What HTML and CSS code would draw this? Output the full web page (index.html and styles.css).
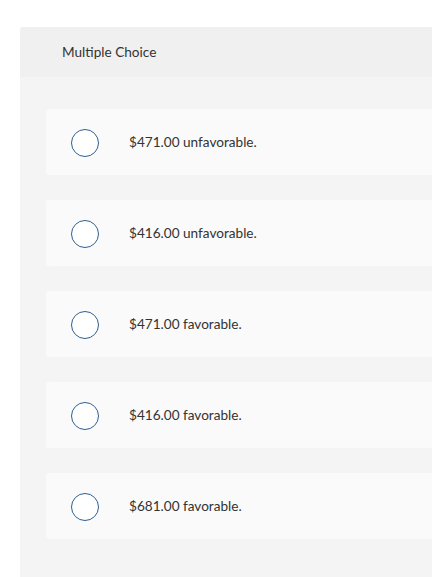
FILE: index.html
```html
<!DOCTYPE html>
<html>
<head>
<meta charset="utf-8">
<link rel="stylesheet" href="styles.css">
</head>
<body>
<div class="question">
  <div class="q-header">Multiple Choice</div>
  <div class="q-body">
    <div class="choice"><span class="radio"></span><span class="label">$471.00 unfavorable.</span></div>
    <div class="choice"><span class="radio"></span><span class="label">$416.00 unfavorable.</span></div>
    <div class="choice"><span class="radio"></span><span class="label">$471.00 favorable.</span></div>
    <div class="choice"><span class="radio"></span><span class="label">$416.00 favorable.</span></div>
    <div class="choice"><span class="radio"></span><span class="label">$681.00 favorable.</span></div>
  </div>
</div>
</body>
</html>
```

FILE: styles.css
```css
html, body {
  margin: 0;
  padding: 0;
  background: #ffffff;
  overflow: hidden;
  height: 577px;
}
body {
  font-family: Lato, "Open Sans", sans-serif;
  color: #333333;
}
.question {
  margin: 27px 0 0 20px;
  width: 430px;
  height: 560px;
  border-radius: 3px 0 0 0;
  background: #f4f4f4;
}
.q-header {
  height: 50px;
  background: #f0f0f0;
  border-radius: 3px 0 0 0;
  display: flex;
  align-items: center;
  padding-left: 42px;
  font-size: 13.6px;
  color: #333333;
}
.q-body {
  padding: 32px 0 0 26px;
  display: flex;
  flex-direction: column;
  gap: 25px;
}
.choice {
  height: 66px;
  background: #fafafa;
  border-radius: 3px;
  display: flex;
  align-items: center;
  padding-left: 25px;
}
.radio {
  width: 26px;
  height: 26px;
  border: 1.3px solid #2d5f92;
  border-radius: 50%;
  background: #ffffff;
  flex: none;
  margin-top: 1px;
}
.label {
  margin-left: 30px;
  font-size: 13.6px;
  color: #333333;
}
```
